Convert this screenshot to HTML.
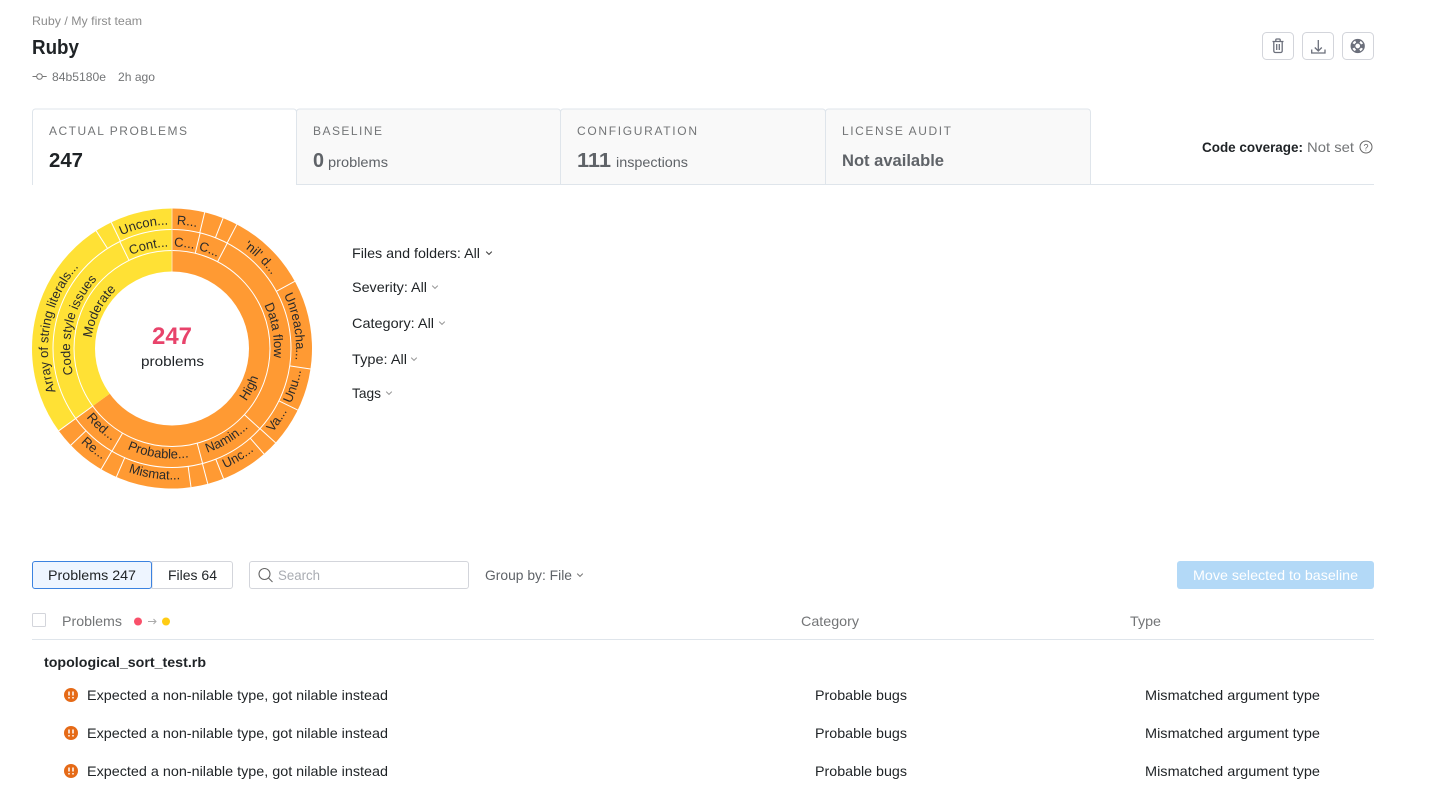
<!DOCTYPE html>
<html lang="en">
<head>
<meta charset="utf-8">
<title>Ruby</title>
<style>
html,body{margin:0;padding:0;background:#fff;overflow:hidden}
svg{display:block}
text{font-family:"Liberation Sans",sans-serif;font-size:14px;fill:#1f2326}
.g{fill:#5f6368}
.lab{font-size:12px;fill:#737577}
.b{font-weight:700}
.sb text{font-size:13px;text-anchor:middle;fill:#2a2a2a}
.sep line{stroke:#fff;stroke-width:1}
.ic{fill:none;stroke:#6b6f7b;stroke-width:1.300}
.ch{fill:none;stroke:#999;stroke-width:1}
</style>
</head>
<body>
<svg width="1440" height="789" viewBox="0 0 1440 789" xmlns="http://www.w3.org/2000/svg">
<defs>
<path id="t81" d="M0 81A81 81 0 1 1 0 -81A81 81 0 1 1 0 81"/>
<path id="t102" d="M0 102A102 102 0 1 1 0 -102A102 102 0 1 1 0 102"/>
<path id="t124" d="M0 124A124 124 0 1 1 0 -124A124 124 0 1 1 0 124"/>
<path id="b91" d="M0 -91A91 91 0 1 0 0 91A91 91 0 1 0 0 -91"/>
<path id="b110" d="M0 -110A110 110 0 1 0 0 110A110 110 0 1 0 0 -110"/>
<path id="b131" d="M0 -131A131 131 0 1 0 0 131A131 131 0 1 0 0 -131"/>
</defs>
<text x="32" y="25" style="font-size:12px;fill:#8c8c8c" textLength="110" lengthAdjust="spacingAndGlyphs">Ruby / My first team</text>
<text x="32" y="54" class="b" style="font-size:20px" textLength="47" lengthAdjust="spacingAndGlyphs">Ruby</text>
<g fill="none" stroke="#777" stroke-width="1"><circle cx="39.500" cy="76.500" r="2.800"/><path d="M32.500 76.500h4.200M42.300 76.500h4.400"/></g>
<text x="52" y="81" style="font-size:12px;fill:#737577" textLength="54" lengthAdjust="spacingAndGlyphs">84b5180e</text>
<text x="118" y="81" style="font-size:12px;fill:#737577" textLength="37" lengthAdjust="spacingAndGlyphs">2h ago</text>

<g fill="#fff" stroke="#d3d5db"><rect x="1262.500" y="32.500" width="31" height="27" rx="4"/><rect x="1302.500" y="32.500" width="31" height="27" rx="4"/><rect x="1342.500" y="32.500" width="31" height="27" rx="4"/></g>
<g class="ic">
<path d="M1272.500 41.500h11M1275.800 41.500v-1.500a1 1 0 0 1 1-1h2.400a1 1 0 0 1 1 1v1.500M1273.800 41.500v9.500a1.500 1.500 0 0 0 1.500 1.500h5.400a1.500 1.500 0 0 0 1.500-1.500v-9.500M1276.700 44v6M1279.300 44v6"/>
<path d="M1318.300 40v11M1314.800 47.500l3.500 3.500l3.500-3.500M1311.700 49.500v3.500h13.300v-3.500"/>
<circle cx="1357.700" cy="46" r="6.500"/><circle cx="1357.700" cy="46" r="3"/>
<circle cx="1357.700" cy="46" r="4.800" stroke-width="3" stroke-dasharray="4.500 3.040" stroke-dashoffset="2.250"/>
</g>

<path d="M296.500 184.500H1374" stroke="#dfe5eb" fill="none"/>
<path d="M296.500 184.500V112a3 3 0 0 1 3-3H557.500a3 3 0 0 1 3 3V184.500z" fill="#f9f9f9" stroke="#dfe5eb"/>
<path d="M560.500 184.500V112a3 3 0 0 1 3-3H822.500a3 3 0 0 1 3 3V184.500z" fill="#f9f9f9" stroke="#dfe5eb"/>
<path d="M825.500 184.500V112a3 3 0 0 1 3-3H1087.500a3 3 0 0 1 3 3V184.500z" fill="#f9f9f9" stroke="#dfe5eb"/>
<path d="M32.500 185V112a3 3 0 0 1 3-3H293.500a3 3 0 0 1 3 3V185" fill="#fff" stroke="#dfe5eb"/>

<text x="49" y="135" class="lab" textLength="138">ACTUAL PROBLEMS</text>
<text x="49" y="167" class="b" style="font-size:20px" textLength="34" lengthAdjust="spacingAndGlyphs">247</text>
<text x="313" y="135" class="lab" textLength="69">BASELINE</text>
<text x="313" y="167" class="b" style="font-size:20px;fill:#5f6368" textLength="11" lengthAdjust="spacingAndGlyphs">0</text>
<text x="328" y="167" class="g" textLength="60" lengthAdjust="spacingAndGlyphs">problems</text>
<text x="577" y="135" class="lab" textLength="120">CONFIGURATION</text>
<text x="577" y="167" class="b" style="font-size:20px;fill:#5f6368" textLength="34" lengthAdjust="spacingAndGlyphs">111</text>
<text x="616" y="167" class="g" textLength="72" lengthAdjust="spacingAndGlyphs">inspections</text>
<text x="842" y="135" class="lab" textLength="109">LICENSE AUDIT</text>
<text x="842" y="166" class="b" style="font-size:17px;fill:#5f6368" textLength="102" lengthAdjust="spacingAndGlyphs">Not available</text>

<text x="1202" y="152" class="b" textLength="101" lengthAdjust="spacingAndGlyphs">Code coverage:</text>
<text x="1307" y="152" style="fill:#737577" textLength="47" lengthAdjust="spacingAndGlyphs">Not set</text>
<circle cx="1366" cy="147" r="6" fill="none" stroke="#666" stroke-width="1"/>
<text x="1366" y="150.500" text-anchor="middle" style="font-size:9px;fill:#666">?</text>

<path d="M172 348.500L172 208.500A140 140 0 1 1 58.740 430.790Z" fill="#ff9a33"/>
<path d="M172 348.500L58.740 430.790A140 140 0 0 1 172 208.500Z" fill="#ffe135"/>
<g fill="none" stroke="#fff" stroke-width="1"><circle cx="172" cy="348.500" r="98"/><circle cx="172" cy="348.500" r="119"/></g>
<circle cx="172" cy="348.500" r="77" fill="#fff"/>
<g transform="translate(172 348.500)">
<g class="sep">
<line y1="-77" y2="-140" style="stroke:#ffe0b0"/>
<line y1="-98" y2="-119" transform="rotate(13.700)"/>
<line y1="-98" y2="-119" transform="rotate(27.700)"/>
<line y1="-98" y2="-119" transform="rotate(132.400)"/>
<line y1="-98" y2="-119" transform="rotate(165.100)"/>
<line y1="-98" y2="-119" transform="rotate(210.300)"/>
<line y1="-98" y2="-140" transform="rotate(234)"/>
<line y1="-98" y2="-119" transform="rotate(334)"/>
<line y1="-119" y2="-140" transform="rotate(13.500)"/>
<line y1="-119" y2="-140" transform="rotate(21.400)"/>
<line y1="-119" y2="-140" transform="rotate(27.600)"/>
<line y1="-119" y2="-140" transform="rotate(61.300)"/>
<line y1="-119" y2="-140" transform="rotate(98.400)"/>
<line y1="-119" y2="-140" transform="rotate(116.100)"/>
<line y1="-119" y2="-140" transform="rotate(132.300)"/>
<line y1="-119" y2="-140" transform="rotate(138.900)"/>
<line y1="-119" y2="-140" transform="rotate(158.400)"/>
<line y1="-119" y2="-140" transform="rotate(165.200)"/>
<line y1="-119" y2="-140" transform="rotate(172.200)"/>
<line y1="-119" y2="-140" transform="rotate(203.400)"/>
<line y1="-119" y2="-140" transform="rotate(210.400)"/>
<line y1="-119" y2="-140" transform="rotate(226.300)"/>
<line y1="-119" y2="-140" transform="rotate(327.200)"/>
<line y1="-119" y2="-140" transform="rotate(334.300)"/>
</g>
<g class="sb">
<text><textPath href="#t81" startOffset="32.500%">Moderate</textPath></text>
<text><textPath href="#t102" startOffset="28.900%">Code style issues</textPath></text>
<text><textPath href="#t124" startOffset="27.900%">Array of string literals...</textPath></text>
<text><textPath href="#t102" startOffset="46.400%">Cont...</textPath></text>
<text><textPath href="#t124" startOffset="46.400%">Uncon...</textPath></text>
<text><textPath href="#t124" startOffset="51.900%">R...</textPath></text>
<text><textPath href="#t102" startOffset="51.900%">C...</textPath></text>
<text><textPath href="#t102" startOffset="55.750%">C...</textPath></text>
<text><textPath href="#t124" startOffset="62.350%">'nil' d...</textPath></text>
<text><textPath href="#t102" startOffset="72.200%">Data flow</textPath></text>
<text><textPath href="#t124" startOffset="72.200%">Unreacha...</textPath></text>
<text><textPath href="#b131" startOffset="70.200%">Unu...</textPath></text>
<text><textPath href="#b131" startOffset="65.500%">Va...</textPath></text>
<text><textPath href="#b91" startOffset="67.500%">High</textPath></text>
<text><textPath href="#b110" startOffset="58.700%">Namin...</textPath></text>
<text><textPath href="#b131" startOffset="58.700%">Unc...</textPath></text>
<text><textPath href="#b110" startOffset="47.900%">Probable...</textPath></text>
<text><textPath href="#b131" startOffset="47.800%">Mismat...</textPath></text>
<text><textPath href="#b110" startOffset="38.300%">Red...</textPath></text>
<text><textPath href="#b131" startOffset="39.400%">Re...</textPath></text>
</g>
</g>
<text x="152" y="344" class="b" style="font-size:24px;fill:#e8436b" textLength="40" lengthAdjust="spacingAndGlyphs">247</text>
<text x="141" y="366" textLength="63" lengthAdjust="spacingAndGlyphs">problems</text>

<text x="352" y="258" textLength="128" lengthAdjust="spacingAndGlyphs">Files and folders: All</text>
<path d="M486.200 251.600l2.800 2.800l2.800-2.800" fill="none" stroke="#444" stroke-width="1.100"/>
<text x="352" y="292" textLength="75" lengthAdjust="spacingAndGlyphs">Severity: All</text>
<path class="ch" d="M432.200 285.600l2.800 2.800l2.800-2.800"/>
<text x="352" y="328" textLength="82" lengthAdjust="spacingAndGlyphs">Category: All</text>
<path class="ch" d="M439.200 321.600l2.800 2.800l2.800-2.800"/>
<text x="352" y="364" textLength="55" lengthAdjust="spacingAndGlyphs">Type: All</text>
<path class="ch" d="M411.200 357.600l2.800 2.800l2.800-2.800"/>
<text x="352" y="398" textLength="29" lengthAdjust="spacingAndGlyphs">Tags</text>
<path class="ch" d="M386.200 391.600l2.800 2.800l2.800-2.800"/>

<path d="M152 561.500H230a2.500 2.500 0 0 1 2.500 2.500V586a2.500 2.500 0 0 1-2.500 2.500H152z" fill="#fff" stroke="#d3d5db"/>
<rect x="32.500" y="561.500" width="119" height="27" rx="2.500" fill="#eef5ff" stroke="#3b82e0"/>
<text x="48" y="580" textLength="88" lengthAdjust="spacingAndGlyphs">Problems 247</text>
<text x="168" y="580" textLength="49" lengthAdjust="spacingAndGlyphs">Files 64</text>
<rect x="249.500" y="561.500" width="219" height="27" rx="2.500" fill="#fff" stroke="#d3d5db"/>
<circle cx="264.500" cy="574" r="5.500" fill="none" stroke="#666" stroke-width="1.100"/><path d="M268.500 578l4 4" stroke="#666" stroke-width="1.100"/>
<text x="278" y="580" style="fill:#a9acb2" textLength="42" lengthAdjust="spacingAndGlyphs">Search</text>
<text x="485" y="580" class="g" textLength="87" lengthAdjust="spacingAndGlyphs">Group by: File</text>
<path d="M577.200 573.600l2.800 2.800l2.800-2.800" fill="none" stroke="#777" stroke-width="1"/>
<rect x="1177" y="561" width="197" height="28" rx="3" fill="#b3d9f7"/>
<text x="1193" y="580" style="fill:#fff" textLength="165" lengthAdjust="spacingAndGlyphs">Move selected to baseline</text>

<rect x="32.500" y="613.500" width="13" height="13" rx="1" fill="#fff" stroke="#d3d5db"/>
<text x="62" y="626" style="fill:#737577" textLength="60" lengthAdjust="spacingAndGlyphs">Problems</text>
<circle cx="138" cy="621.500" r="4" fill="#f9506a"/>
<path d="M148 621.500h8M153.500 619l2.500 2.500l-2.500 2.500" fill="none" stroke="#aaa"/>
<circle cx="166" cy="621.500" r="4" fill="#ffcc14"/>
<text x="801" y="626" style="fill:#737577" textLength="58" lengthAdjust="spacingAndGlyphs">Category</text>
<text x="1130" y="626" style="fill:#737577" textLength="31" lengthAdjust="spacingAndGlyphs">Type</text>
<path d="M32 639.500H1374" stroke="#dfe5eb"/>
<text x="44" y="667" class="b" textLength="162" lengthAdjust="spacingAndGlyphs">topological_sort_test.rb</text>

<circle cx="71" cy="695" r="7" fill="#e56a17"/><path d="M69 691.500v4M73 691.500v4M69 697v1.500M73 697v1.500" stroke="#fff" stroke-width="1.500"/>
<text x="87" y="700" textLength="301" lengthAdjust="spacingAndGlyphs">Expected a non-nilable type, got nilable instead</text>
<text x="815" y="700" textLength="92" lengthAdjust="spacingAndGlyphs">Probable bugs</text>
<text x="1145" y="700" textLength="175" lengthAdjust="spacingAndGlyphs">Mismatched argument type</text>

<circle cx="71" cy="733" r="7" fill="#e56a17"/><path d="M69 729.500v4M73 729.500v4M69 735v1.500M73 735v1.500" stroke="#fff" stroke-width="1.500"/>
<text x="87" y="738" textLength="301" lengthAdjust="spacingAndGlyphs">Expected a non-nilable type, got nilable instead</text>
<text x="815" y="738" textLength="92" lengthAdjust="spacingAndGlyphs">Probable bugs</text>
<text x="1145" y="738" textLength="175" lengthAdjust="spacingAndGlyphs">Mismatched argument type</text>

<circle cx="71" cy="771" r="7" fill="#e56a17"/><path d="M69 767.500v4M73 767.500v4M69 773v1.500M73 773v1.500" stroke="#fff" stroke-width="1.500"/>
<text x="87" y="776" textLength="301" lengthAdjust="spacingAndGlyphs">Expected a non-nilable type, got nilable instead</text>
<text x="815" y="776" textLength="92" lengthAdjust="spacingAndGlyphs">Probable bugs</text>
<text x="1145" y="776" textLength="175" lengthAdjust="spacingAndGlyphs">Mismatched argument type</text>
</svg>
</body>
</html>
